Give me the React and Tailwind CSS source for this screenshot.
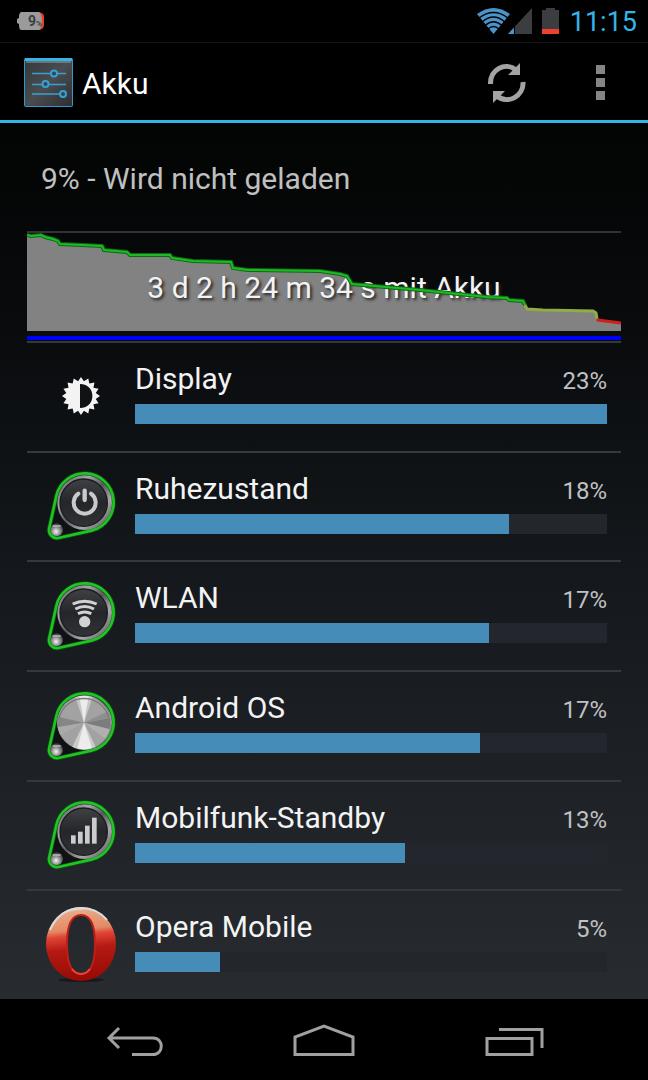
import React from "react";

// battery usage per consumer, level is the bar width relative to the top entry
const consumers = [
  { name: "Display", percent: 23, level: 100, icon: DisplayIcon },
  { name: "Ruhezustand", percent: 18, level: 79.2, icon: PowerIcon },
  { name: "WLAN", percent: 17, level: 75, icon: WlanIcon },
  { name: "Android OS", percent: 17, level: 73.1, icon: MetalIcon },
  { name: "Mobilfunk-Standby", percent: 13, level: 57.2, icon: CellIcon },
  { name: "Opera Mobile", percent: 5, level: 18, icon: OperaIcon },
];

const greenLine =
  "0,2 4,3 14,2 18,4 26,6 31,8 33,11 55,12 75,13 77,17 100,19 103,22 143,22 145,25 166,28 204,29 206,35 221,37 293,38 313,41 320,43 325,51 393,57 460,64 480,65 482,67 496,68 498,72";
const yellowLine = "498,72 500,76 516,77 566,78 569,80 570,86";
const redLine = "570,86 571,87 594,90";

function DisplayIcon() {
  const points = Array.from({ length: 32 }, (_, i) => {
    const angle = (i * Math.PI) / 16;
    const radius = i % 2 === 0 ? 19 : 15;
    return `${20 + radius * Math.sin(angle)},${20 - radius * Math.cos(angle)}`;
  }).join(" ");
  return (
    <svg viewBox="0 1 40 40" className="h-10 w-10" aria-hidden="true">
      <polygon points={points} fill="#f3f3f3" />
      <path d="M19 8C35.500 8 35.500 32 19 32Z" fill="#101214" />
    </svg>
  );
}

// round metal knob with the green teardrop outline
function Knob({ id, metal, children }) {
  return (
    <svg viewBox="0 0 246 240" className="h-20 w-[82px] shrink-0" aria-hidden="true">
      <defs>
        <linearGradient id={`${id}-ring`} x1="0" y1="0" x2="1" y2="1">
          <stop offset="0" stopColor="#55575a" />
          <stop offset="0.3" stopColor="#a5a5a7" />
          <stop offset="0.5" stopColor="#55575a" />
          <stop offset="0.7" stopColor="#a8a8a8" />
          <stop offset="1" stopColor="#44464a" />
        </linearGradient>
        <linearGradient id={`${id}-face`} x1="0" y1="0" x2="0" y2="1">
          <stop offset="0" stopColor="#3f4144" />
          <stop offset="0.5" stopColor="#242629" />
          <stop offset="1" stopColor="#303235" />
        </linearGradient>
        <radialGradient id={`${id}-screw`} cx="0.45" cy="0.65" r="0.6">
          <stop offset="0" stopColor="#f4f4f4" />
          <stop offset="0.5" stopColor="#97999b" />
          <stop offset="1" stopColor="#3c3e40" />
        </radialGradient>
      </defs>
      <path
        d="M27 190L49 90A87 87 0 1 1 157 193L55 216A24 24 0 0 1 27 190Z"
        fill="#101114"
        stroke="#0a4d10"
        strokeWidth="13"
      />
      <path
        d="M27 190L49 90A87 87 0 1 1 157 193L55 216A24 24 0 0 1 27 190Z"
        fill="none"
        stroke="#20c424"
        strokeWidth="8"
      />
      <circle cx="134" cy="110" r="82" fill={`url(#${id}-ring)`} />
      <circle cx="131" cy="110" r="71" fill={`url(#${id}-face)`} stroke="#1b1c1e" strokeWidth="4" />
      {metal && (
        <g>
          <circle cx="132" cy="110" r="80" fill="#a2a2a2" />
          <path d="M132 110L106 34A80 80 0 0 1 158 34Z" fill="#c6c6c6" />
          <path d="M132 110L118 31A80 80 0 0 1 146 31Z" fill="#ececec" />
          <path d="M132 110L97 182A80 80 0 0 0 167 182Z" fill="#cbcbcb" />
          <path d="M132 110L112 187A80 80 0 0 0 156 186Z" fill="#ececec" />
          <path d="M132 110L54 92A80 80 0 0 0 53 124Z" fill="#868686" />
          <path d="M132 110L211 96A80 80 0 0 1 209 130Z" fill="#7c7c7c" />
          <path d="M132 110L204 76A80 80 0 0 1 211 96Z" fill="#8e8e8e" />
          <path d="M132 110L53 124A80 80 0 0 0 62 148Z" fill="#aaaaaa" />
          <path d="M132 110L209 130A80 80 0 0 1 196 158Z" fill="#b0b0b0" />
          <path d="M57 97A77 77 0 0 1 207 97" fill="none" stroke="#7a7a7a" strokeWidth="4" />
        </g>
      )}
      <circle cx="50" cy="191" r="19" fill={`url(#${id}-screw)`} />
      <path d="M38 180H62" stroke="#c5c6c7" strokeWidth="4" />
      {children}
    </svg>
  );
}

function PowerIcon() {
  return (
    <Knob id="power">
      <g fill="none" stroke="#c9cacc" strokeLinecap="round">
        <path d="M115 83A33 33 0 1 0 153 83" strokeWidth="12" />
        <path d="M134 74V102" strokeWidth="13" />
      </g>
    </Knob>
  );
}

function WlanIcon() {
  return (
    <Knob id="wlan">
      <circle cx="134" cy="137" r="17" fill="#d2d2d4" />
      <g fill="none" stroke="#d2d2d4" strokeWidth="9">
        <path d="M98 84Q134 67 170 84" />
        <path d="M106 99Q134 84 162 99" />
        <path d="M114 113Q134 103 154 113" />
      </g>
    </Knob>
  );
}

function MetalIcon() {
  return <Knob id="metal" metal />;
}

function CellIcon() {
  return (
    <Knob id="cell">
      <g fill="#cbcccd">
        <rect x="93" y="121" width="14" height="25" />
        <rect x="114" y="110" width="14" height="36" />
        <rect x="135" y="92" width="14" height="54" />
        <rect x="156" y="68" width="14" height="78" />
      </g>
    </Knob>
  );
}

function OperaIcon() {
  return (
    <svg viewBox="0 0 72 78" className="h-[78px] w-[72px]" aria-hidden="true">
      <defs>
        <linearGradient id="opera-red" x1="0.45" y1="0" x2="0.55" y2="1">
          <stop offset="0" stopColor="#f0ebe8" />
          <stop offset="0.06" stopColor="#e8a883" />
          <stop offset="0.3" stopColor="#e38a66" />
          <stop offset="0.38" stopColor="#e04535" />
          <stop offset="0.56" stopColor="#b31a12" />
          <stop offset="1" stopColor="#960a05" />
        </linearGradient>
      </defs>
      <ellipse cx="36" cy="74" rx="23" ry="2" fill="#17191b" />
      <path
        d="M36 1A35 37 0 1 0 36 75A35 37 0 1 0 36 1ZM36 9C47 9 50 24 50 38C50 53 47 68 36 68C25 68 22 53 22 38C22 24 25 9 36 9Z"
        fill="url(#opera-red)"
        fillRule="evenodd"
      />
      <path d="M5 24Q14 3 36 2Q52 2 62 14" fill="none" stroke="#d8dbde" strokeWidth="2" />
      <path
        d="M36 9C47 9 50 24 50 38C50 53 47 68 36 68C25 68 22 53 22 38C22 24 25 9 36 9Z"
        fill="none"
        stroke="#c01f17"
        strokeWidth="2"
      />
      <path d="M27 63Q31 68 36 68Q41 68 45 63" fill="none" stroke="#ef4438" strokeWidth="2" />
    </svg>
  );
}

function StatusBar() {
  return (
    <div className="flex h-[43px] items-center justify-between border-b border-[#141617] pr-[11px] pl-4">
      <svg viewBox="0 0 28 18" className="h-[18px] w-7" role="img" aria-label="Akku 9%">
        <path d="M5 0H23Q27 1 27 4V14Q27 17 23 18H5Q3 17 3 14V12L1 11V7L3 6V4Q3 1 5 0Z" fill="#9a9b9b" />
        <path d="M24 1Q28 1 28 5V13Q28 17 24 17Q26 13 26 9Q26 5 24 1Z" fill="#e8402e" />
        <text x="12" y="14" fontSize="14" fontWeight="700" fontFamily="Roboto, sans-serif" fill="#3c3d3e">
          9
        </text>
        <text x="20" y="14" fontSize="8" fontWeight="700" fontFamily="Roboto, sans-serif" fill="#3c3d3e">
          %
        </text>
      </svg>
      <div className="flex items-center">
        <svg viewBox="0 0 84 28" className="mr-[10px] h-7 w-[84px]" aria-hidden="true">
          <path d="M17.500 27L1 7Q17.500 -5 34 7Z" fill="#4b94c8" />
          <g fill="none" stroke="#000" strokeWidth="1.300">
            <path d="M3 11Q17.500 0 32 11" />
            <path d="M6 15Q17.500 5 29 15" />
            <path d="M9 18.500Q17.500 11 26 18.500" />
            <path d="M12 22Q17.500 17 23 22" />
          </g>
          <path d="M56 1V27H32Z" fill="#3b3d40" />
          <path d="M38 20.500V27H32Z" fill="#4b94c8" />
          <path d="M38.500 20V27" stroke="#000" />
          <path d="M70 1H79V3H83V27H66V3H70Z" fill="#3b3d40" />
          <path d="M66 22H83V27H66Z" fill="#f0402f" />
        </svg>
        <span className="pt-[2px] text-[27px] leading-8 text-[#33b5e5]">11:15</span>
      </div>
    </div>
  );
}

function ActionBar() {
  return (
    <header className="flex h-20 items-center border-b-3 border-[#33b5e5] px-6 pt-[2px]">
      <svg viewBox="0 0 49 49" className="h-[49px] w-[49px]" aria-hidden="true">
        <defs>
          <linearGradient id="settings-face" x1="0" y1="0" x2="1" y2="1">
            <stop offset="0" stopColor="#35383b" />
            <stop offset="0.5" stopColor="#4a4d50" />
            <stop offset="1" stopColor="#2c2f32" />
          </linearGradient>
        </defs>
        <rect x="0.500" y="0.500" width="48" height="48" rx="1" fill="url(#settings-face)" stroke="#3397cb" />
        <path d="M1 1.500H48" stroke="#33b5e5" strokeWidth="3" />
        <path d="M2 4H47" stroke="#9da4a8" />
        <g stroke="#3a9fd4" strokeWidth="1.500" fill="#34454f">
          <path d="M8 15.500H42M8 26.500H42M8 36H42" />
          <circle cx="30" cy="15.500" r="3" strokeWidth="2" />
          <circle cx="21.500" cy="26" r="3" strokeWidth="2" />
          <circle cx="39" cy="36" r="3" strokeWidth="2" />
        </g>
      </svg>
      <h1 className="ml-[9px] flex-1 pt-[2px] text-[30px] leading-9">Akku</h1>
      <button type="button" aria-label="Aktualisieren" className="mr-[69px]">
        <svg viewBox="0 0 40 42" className="h-[42px] w-10" aria-hidden="true">
          <g fill="none" stroke="#a3a3a3" strokeWidth="5">
            <path d="M3.500 22C3 8 18 -1 29 8" />
            <path d="M36 20C37 34 21 43 10 34" />
          </g>
          <path d="M33 1V13H21ZM6 41V29H18Z" fill="#a3a3a3" />
        </svg>
      </button>
      <button type="button" aria-label="Weitere Optionen" className="mr-[19px] grid gap-1">
        <span className="h-[9px] w-[9px] bg-[#858585]" />
        <span className="h-[9px] w-[9px] bg-[#858585]" />
        <span className="h-[9px] w-[9px] bg-[#858585]" />
      </button>
    </header>
  );
}

function BatteryChart() {
  return (
    <section className="relative flex h-[110px] items-center justify-center border-t-2 border-[#303234]">
      <svg viewBox="0 0 594 108" preserveAspectRatio="none" className="absolute inset-0 h-full w-full" aria-hidden="true">
        <polygon points={`0,98 ${greenLine} ${yellowLine} ${redLine} 594,98`} fill="#828282" />
        <rect x="0" y="103" width="594" height="4" fill="#0000ff" />
      </svg>
      <p className="relative pt-[2px] text-[30px] leading-9 text-[#f3f3f3] [text-shadow:2px_2px_3px_#222]">
        3 d 2 h 24 m 34 s mit Akku
      </p>
      <svg viewBox="0 0 594 108" preserveAspectRatio="none" className="absolute inset-0 h-full w-full" aria-hidden="true">
        <g fill="none" strokeWidth="3">
          <polyline points={greenLine} stroke="#0b6b10" strokeWidth="4" />
          <polyline points={greenLine} stroke="#20b826" strokeWidth="2" />
          <polyline points={yellowLine} stroke="#8fac45" />
          <polyline points={redLine} stroke="#cf2119" />
        </g>
      </svg>
    </section>
  );
}

function ConsumerRow({ name, percent, level, icon: Icon }) {
  return (
    <li className="flex border-t-2 border-[#36393b] pr-[14px] pl-[13px]">
      <div className="flex w-[82px] shrink-0 items-center justify-center">
        <Icon />
      </div>
      <div className="ml-[13px] flex-1 pt-[18px]">
        <div className="flex items-baseline justify-between">
          <h2 className="text-[30px] leading-9 text-[#f3f3f3]">{name}</h2>
          <span className="text-2xl leading-9 text-[#c0c1c2]">{percent}%</span>
        </div>
        <div className="mt-[5px] h-5 bg-[#24262e]">
          <div className="h-full bg-[#468cb9]" style={{ width: `${level}%` }} />
        </div>
      </div>
    </li>
  );
}

function NavBar() {
  return (
    <nav className="flex h-[81px] items-center justify-between bg-black px-[103px]">
      <button type="button" aria-label="Zurück">
        <svg viewBox="0 0 64 40" className="h-10 w-16" fill="none" stroke="#a0a0a0" strokeWidth="3" aria-hidden="true">
          <path d="M16 8L6 18L16 28M6 18H50C61 18 61 34.500 50 34.500H29" />
        </svg>
      </button>
      <button type="button" aria-label="Startseite">
        <svg viewBox="0 0 64 40" className="h-10 w-16" fill="none" stroke="#a0a0a0" strokeWidth="3" aria-hidden="true">
          <path d="M3 34.500V17L32 6L61 17V34.500Z" />
        </svg>
      </button>
      <button type="button" aria-label="Letzte Apps">
        <svg viewBox="0 0 64 40" className="h-10 w-16" fill="none" stroke="#a0a0a0" strokeWidth="3" aria-hidden="true">
          <path d="M6 18.500H51V34.500H6ZM18 9.500H61V28" />
        </svg>
      </button>
    </nav>
  );
}

const App = () => {
  return (
    <div className="flex min-h-screen flex-col bg-black font-[Roboto,sans-serif] text-white">
      <StatusBar />
      <ActionBar />
      <main className="flex flex-1 flex-col bg-linear-to-b from-[#030404] via-[#14171b] to-[#282c31] px-[27px]">
        <p className="flex h-[108px] items-center pt-1 pl-[14px] text-[30px] leading-9 text-[#c0c0c0]">
          9% - Wird nicht geladen
        </p>
        <BatteryChart />
        <ul className="grid flex-1 auto-rows-fr">
          {consumers.map((item) => (
            <ConsumerRow key={item.name} {...item} />
          ))}
        </ul>
      </main>
      <NavBar />
    </div>
  );
};

export default App;
